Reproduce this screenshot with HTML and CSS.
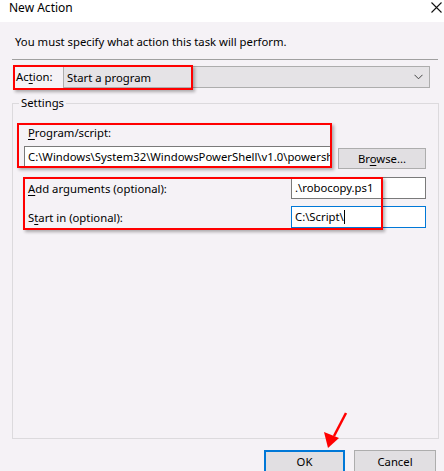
FILE: index.html
```html
<!DOCTYPE html>
<html lang="en">
<head>
	<meta charset="UTF-8">
	<title>New Action</title>
	<link rel="stylesheet" href="styles.css">
</head>
<body>
	<div class="titlebar">
		<span class="title">New Action</span>
		<svg class="close" width="11" height="11" viewBox="0 0 11 11"><path d="M0.5 0.5L10.5 10.5M10.5 0.5L0.5 10.5" stroke="#111" stroke-width="1.1" fill="none"/></svg>
	</div>

	<div class="content">
		<p class="intro">You must specify what action this task will perform.</p>
		<div class="sep"></div>

		<div class="action-row">
			<label class="action-label">Ac<u>t</u>ion:</label>
			<div class="combo">
				<span>Start a program</span>
				<svg width="9" height="6" viewBox="0 0 9 6"><path d="M0.5 0.8L4.5 4.8L8.5 0.8" stroke="#444" stroke-width="1" fill="none"/></svg>
			</div>
		</div>

		<fieldset class="group">
			<legend>Settings</legend>
			<div class="field-label"><u>P</u>rogram/script:</div>
			<div class="program-row">
				<div class="input program-input">C:\Windows\System32\WindowsPowerShell\v1.0\powershell.exe</div>
				<button class="btn browse">Br<u>o</u>wse...</button>
			</div>
			<div class="arg-row first">
				<span class="arg-label"><u>A</u>dd arguments (optional):</span>
				<div class="input">.\robocopy.ps1</div>
			</div>
			<div class="arg-row">
				<span class="arg-label">S<u>t</u>art in (optional):</span>
				<div class="input focused">C:\Script\<span class="caret"></span></div>
			</div>
		</fieldset>

		<div class="buttons">
			<button class="btn ok">OK</button>
			<button class="btn">Cancel</button>
		</div>
	</div>

	<!-- annotations drawn over the dialog -->
	<div class="mark mark-action"></div>
	<div class="mark mark-program"></div>
	<div class="mark mark-args"></div>
	<svg class="arrow" width="444" height="471" viewBox="0 0 444 471">
		<line x1="346" y1="413" x2="334" y2="436" stroke="#f00" stroke-width="2.5"/>
		<polygon points="328,448 324,432 339,438" fill="#f00"/>
	</svg>
</body>
</html>
```

FILE: styles.css
```css
body{
	margin:0;
	width:444px; height:471px;
	overflow:hidden;
	position:relative;
	background:#f5f2f6;
	font-family:"Noto Sans", sans-serif;
	font-size:11.3px;
	color:#000;
}
u{ text-decoration-thickness:1px; text-underline-offset:2px; }

.titlebar{
	height:22px; background:#fff;
	display:flex; justify-content:space-between;
	padding:0 2px 0 9px;
}
.title{ font-size:12px; line-height:15px; }
.close{ margin-top:2px; }

.content{ padding:0 5px 0 12px; }
.intro{ margin:0; padding:12px 0 0 3px; line-height:16px; }
.sep{ height:1px; background:#a0a0a0; margin:9px 1px 0 0; }

.action-row{ display:flex; align-items:center; margin-top:6px; }
.action-label{ width:47px; padding-left:4px; line-height:16px; }
.combo{
	width:367px; height:22px; box-sizing:border-box;
	border:1px solid #adadad; background:#e5e3e6;
	display:flex; align-items:center; justify-content:space-between;
	padding:0 6px 0 3px;
}

.group{
	margin:7px 0 0 0; padding:0 0 0 6px;
	border:1px solid #dcdadd;
	height:344px; box-sizing:border-box;
}
.group legend{ padding:0 2px; line-height:16px; }
.field-label{ margin-top:14px; padding-left:9px; line-height:16px; }

.program-row{ display:flex; align-items:flex-start; margin-top:5px; padding-left:5px; }
.input{
	height:22px; box-sizing:border-box;
	border:1px solid #7a7a7a; background:#fff;
	padding:0 3px; line-height:20px;
	white-space:nowrap; overflow:hidden;
}
.program-input{ width:308px; height:21px; line-height:19px; }
.btn{
	font:inherit; color:#000;
	background:#e1dfe2; border:1px solid #adadad;
	height:23px; padding:0;
}
.browse{ width:88px; height:21px; margin:2px 0 0 6px; }

.arg-row{ display:flex; align-items:center; justify-content:space-between; margin-top:7px; padding-left:9px; }
.arg-row.first{ margin-top:8px; }
.arg-row .input{ width:135px; margin-right:12px; }
.input.focused{ border-color:#0078d7; }
.caret{ display:inline-block; width:1px; height:14px; background:#000; vertical-align:-3px; }

.buttons{ display:flex; justify-content:flex-end; gap:9px; margin-top:11px; padding-right:3px; }
.buttons .btn{ width:82px; }
.buttons .ok{ width:81px; border:2px solid #0078d7; }

.mark{
	position:absolute; box-sizing:border-box;
	border:2px solid #f00;
	box-shadow:2px 2px 3px rgba(0,0,0,.3);
}
.mark-action{ left:13px; top:65px; width:180px; height:25px; }
.mark-program{ left:17px; top:123px; width:315px; height:45px; }
.mark-args{ left:23px; top:177px; width:360px; height:53px; }
.arrow{ position:absolute; left:0; top:0; }
```
